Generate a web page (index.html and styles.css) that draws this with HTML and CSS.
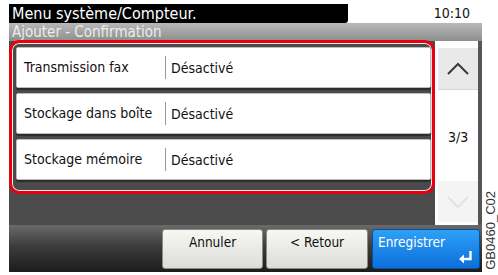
FILE: index.html
```html
<!DOCTYPE html>
<html lang="fr">
<head>
    <meta charset="UTF-8">
    <meta name="viewport" content="width=device-width, initial-scale=1.0">
    <title>Ajouter - Confirmation</title>
    <link rel="stylesheet" href="styles.css">
</head>
<body>
    <div class="screen">
        <div class="topbar">
            <div class="title">Menu système/Compteur.</div>
            <div class="clock">10:10</div>
        </div>
        <div class="subbar">Ajouter - Confirmation</div>

        <div class="main">
            <div class="list">
                <div class="row">
                    <span class="label">Transmission fax</span>
                    <span class="value">Désactivé</span>
                </div>
                <div class="row">
                    <span class="label">Stockage dans boîte</span>
                    <span class="value">Désactivé</span>
                </div>
                <div class="row">
                    <span class="label">Stockage mémoire</span>
                    <span class="value">Désactivé</span>
                </div>
            </div>

            <div class="scroller">
                <div class="scroll-btn">
                    <svg width="24" height="14" viewBox="0 0 24 14">
                        <path d="M2 12 L12 2 L22 12" fill="none" stroke="#3a3a3a" stroke-width="2"/>
                    </svg>
                </div>
                <div class="page">3/3</div>
                <div class="scroll-btn disabled">
                    <svg width="24" height="14" viewBox="0 0 24 14">
                        <path d="M2 2 L12 12 L22 2" fill="none" stroke="#e2e2e2" stroke-width="2"/>
                    </svg>
                </div>
            </div>
        </div>

        <div class="actions">
            <button class="btn btn-cancel">Annuler</button>
            <button class="btn btn-back">&lt; Retour</button>
            <button class="btn btn-save">
                Enregistrer
                <svg class="enter" width="14" height="13" viewBox="0 0 14 13">
                    <path d="M11.5 0 V8 H3" fill="none" stroke="#fff" stroke-width="2.4"/>
                    <path d="M0 8 L5 3.5 V12.5 Z" fill="#fff"/>
                </svg>
            </button>
        </div>
    </div>
    <div class="code">GB0460_C02</div>
</body>
</html>
```

FILE: styles.css
```css
body {
    margin: 0;
    padding: 4px 0 0 9px;
    display: flex;
    font-family: "DejaVu Sans Condensed", "DejaVu Sans", sans-serif;
    font-stretch: condensed;
    background: #fff;
}

.screen {
    width: 473px;
    height: 268px;
    display: flex;
    flex-direction: column;
}

/* barre du haut */
.topbar {
    display: flex;
    height: 19px;
}

.title {
    width: 336px;
    padding-left: 3px;
    background: #000;
    color: #fff;
    font-size: 16px;
    line-height: 19px;
    border-bottom-right-radius: 3px;
}

.clock {
    flex: 1;
    text-align: right;
    padding-right: 12px;
    font-size: 14px;
    line-height: 19px;
    color: #111;
}

.subbar {
    height: 18px;
    padding-left: 3px;
    background: linear-gradient(#b8b8b8, #8e8e8e);
    color: #ececec;
    font-size: 15px;
    line-height: 19px;
    overflow: hidden;
}

/* zone principale */
.main {
    height: 184px;
    display: flex;
    background: #4b4b4b;
}

.list {
    width: 418px;
    height: 140px;
    margin-top: -1px;
    padding: 4px 1px 4px 4px;
    border: 3px solid #e60012;
    border-radius: 10px;
    box-shadow: inset 0 0 0 1px #fbeaea;
    display: flex;
    flex-direction: column;
    gap: 5px;
}

.row {
    height: 39px;
    display: flex;
    align-items: center;
    background: #fff;
    border: 1px solid #bdbdbd;
    border-radius: 2px;
    box-shadow: 0 2px 1px #2c2c2c;
    font-size: 14px;
    color: #111;
}

.label {
    width: 141px;
    padding-left: 7px;
    border-right: 1px solid #9a9a9a;
    line-height: 23px;
}

.value {
    padding-left: 5px;
}

.scroller {
    width: 40px;
    padding: 7px 0 3px 3px;
    background: #fff;
    border-right: 4px solid #565656;
    display: flex;
    flex-direction: column;
}

.scroll-btn {
    height: 41px;
    display: flex;
    align-items: center;
    justify-content: center;
    background: #e9e9e9;
    border-bottom: 1px solid #d6d6d6;
}

.scroll-btn.disabled {
    background: #f4f4f4;
    border-bottom: none;
}

.page {
    flex: 1;
    display: flex;
    align-items: center;
    justify-content: center;
    padding-top: 3px;
    font-size: 14px;
    color: #111;
}

/* barre des boutons */
.actions {
    height: 47px;
    display: flex;
    justify-content: flex-end;
    align-items: center;
    gap: 3px;
    padding-right: 2px;
    background: linear-gradient(#6a6a6a, #3c3c3c 45%, #1c1c1c);
}

.btn {
    height: 40px;
    padding: 4px 0 0;
    border: 1px solid #8a8a8a;
    border-radius: 3px;
    font-family: inherit;
    font-stretch: condensed;
    font-size: 13.5px;
    color: #111;
    background: linear-gradient(#f7f7f4, #dcdcd8);
    display: flex;
    justify-content: center;
    align-items: flex-start;
    position: relative;
}

.btn-cancel {
    width: 101px;
}

.btn-back {
    width: 102px;
    margin-right: 1px;
}

.btn-save {
    width: 108px;
    justify-content: flex-start;
    padding-left: 5px;
    color: #fff;
    border-color: #0a4f9c;
    background: linear-gradient(#2ea0f6, #0b6fdc);
}

.enter {
    position: absolute;
    right: 6px;
    bottom: 4px;
}

.code {
    align-self: flex-end;
    margin: 0 0 2px 1px;
    writing-mode: vertical-rl;
    transform: rotate(180deg);
    font-family: "Liberation Sans", sans-serif;
    font-size: 13px;
    color: #333;
}
```
